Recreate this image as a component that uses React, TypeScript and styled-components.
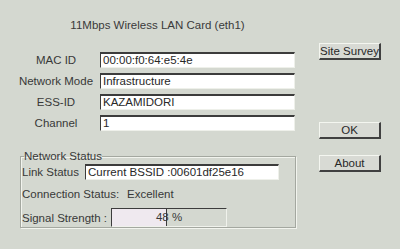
import React from 'react'
import styled, { createGlobalStyle } from 'styled-components'

const GlobalStyle = createGlobalStyle`
  html, body {
    margin: 0;
    padding: 0;
    background: #d4d8d0;
  }
  body {
    font-family: "Liberation Sans", Arial, sans-serif;
    font-size: 11.5px;
    color: #383838;
  }
`

const Window = styled.div`
  width: 400px;
  height: 249px;
  background: #d4d8d0;
  display: flex;
  box-sizing: border-box;
  padding-left: 12px;
  overflow: hidden;
`

const MainColumn = styled.div`
  width: 283px;
  flex-shrink: 0;
  display: flex;
  flex-direction: column;
`

const Title = styled.div`
  height: 13px;
  margin-top: 19px;
  padding-left: 8px;
  text-align: center;
  line-height: 13px;
  color: #3a3a3a;
`

const Form = styled.div`
  margin-top: 20px;
  display: flex;
  flex-direction: column;
  gap: 5px;
`

const FormRow = styled.div`
  display: flex;
  align-items: center;
  height: 16px;
`

const Label = styled.div<{ $width?: number; $align?: string }>`
  width: ${p => p.$width ?? 88}px;
  flex-shrink: 0;
  text-align: ${p => p.$align ?? 'center'};
  white-space: nowrap;
  line-height: 14px;
`

const TextBox = styled.div<{ $width: number }>`
  width: ${p => p.$width}px;
  flex-shrink: 0;
  height: 16px;
  box-sizing: border-box;
  background: #ffffff;
  border-top: 2px solid #3c3c3c;
  border-left: 1px solid #3c3c3c;
  border-right: 1px solid #eef0ea;
  border-bottom: 1px solid #eef0ea;
  padding-left: 2px;
  line-height: 13px;
  color: #282828;
  white-space: nowrap;
  overflow: hidden;
`

const Group = styled.fieldset`
  margin: 19px 0 0 8px;
  width: 276px;
  box-sizing: border-box;
  border: 1px solid #a4a8a0;
  box-shadow: 1px 1px 0 #f2f4ee, inset 1px 1px 0 #f2f4ee;
  padding: 0 1px 0 1px;
  display: flex;
  flex-direction: column;
`

const Legend = styled.legend`
  padding: 0;
  margin-left: 2px;
  line-height: 13px;
  color: #383838;
`

const GroupRow = styled.div<{ $height: number; $top: number }>`
  display: flex;
  align-items: center;
  height: ${p => p.$height}px;
  margin-top: ${p => p.$top}px;
`

const Meter = styled.div`
  position: relative;
  width: 116px;
  flex-shrink: 0;
  height: 19px;
  box-sizing: border-box;
  border-top: 1px solid #3c3c3c;
  border-left: 1px solid #3c3c3c;
  border-right: 1px solid #f0f2ec;
  border-bottom: 1px solid #f0f2ec;
  display: flex;
`

const MeterFill = styled.div`
  height: 100%;
  background: #efe9ef;
  border-right: 1px solid #3c3c3c;
  box-sizing: border-box;
`

const MeterText = styled.div`
  position: absolute;
  inset: 0;
  text-align: center;
  line-height: 16px;
  color: #383838;
`

const ButtonColumn = styled.div`
  margin-left: 24px;
  display: flex;
  flex-direction: column;
  padding-top: 43px;
`

const Button = styled.div<{ $top?: number }>`
  width: 62px;
  height: 17px;
  margin-top: ${p => p.$top ?? 0}px;
  box-sizing: border-box;
  background: #d8dad4;
  border-top: 1px solid #f4f6f0;
  border-left: 1px solid #f4f6f0;
  border-right: 2px solid #404040;
  border-bottom: 2px solid #404040;
  text-align: center;
  line-height: 14px;
  color: #282828;
  white-space: nowrap;
`

const fields = [
  { label: 'MAC ID', value: '00:00:f0:64:e5:4e' },
  { label: 'Network Mode', value: 'Infrastructure' },
  { label: 'ESS-ID', value: 'KAZAMIDORI' },
  { label: 'Channel', value: '1' },
]

export default function App() {
  const signal = 48

  return (
    <Window>
      <GlobalStyle />
      <MainColumn>
        <Title>11Mbps Wireless LAN Card (eth1)</Title>
        <Form>
          {fields.map(f => (
            <FormRow key={f.label}>
              <Label>{f.label}</Label>
              <TextBox $width={195}>{f.value}</TextBox>
            </FormRow>
          ))}
        </Form>
        <Group>
          <Legend>Network Status</Legend>
          <GroupRow $height={16} $top={1}>
            <Label $width={63} $align="left">Link Status</Label>
            <TextBox $width={194}>Current BSSID :00601df25e16</TextBox>
          </GroupRow>
          <GroupRow $height={16} $top={6}>
            <Label $width={105} $align="left">Connection Status:</Label>
            <span>Excellent</span>
          </GroupRow>
          <GroupRow $height={19} $top={6}>
            <Label $width={89} $align="left">Signal Strength :</Label>
            <Meter>
              <MeterFill style={{ width: `${signal}%` }} />
              <MeterText>{signal} %</MeterText>
            </Meter>
          </GroupRow>
        </Group>
      </MainColumn>
      <ButtonColumn>
        <Button>Site Survey</Button>
        <Button $top={62}>OK</Button>
        <Button $top={16}>About</Button>
      </ButtonColumn>
    </Window>
  )
}
